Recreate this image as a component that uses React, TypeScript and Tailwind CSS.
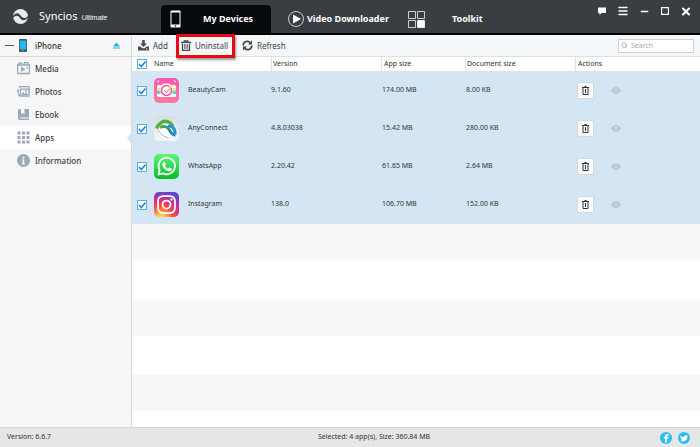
import { useState } from "react"
import { Menu, Minus, Search, X } from "lucide-react"

type AppRow = {
  name: string
  version: string
  appSize: string
  docSize: string
  icon: React.ReactNode
}

function BeautyCamIcon() {
  return (
    <svg viewBox="0 0 50 50" className="w-[25px] h-[25px] shrink-0">
      <defs>
        <linearGradient id="beauty" x1="0" y1="0" x2="0" y2="1">
          <stop offset="0" stopColor="#f957ac" />
          <stop offset="1" stopColor="#fb7c9c" />
        </linearGradient>
      </defs>
      <rect width="50" height="50" rx="10" fill="url(#beauty)" />
      <path d="M7 8l3-3M43 8l-3-3" stroke="#fdd0e6" strokeWidth="3" />
      <path d="M9 14h7l3-3h12l3 3h7q3 0 3 3v18q0 3-3 3H9q-3 0-3-3V17q0-3 3-3z" fill="#fff" />
      <path d="M6 20h7v6H6zM37 20h7v6h-7z" fill="#ffe45c" />
      <path d="M6 26h7v6H6zM37 26h7v6h-7z" fill="#4fd3ee" />
      <circle cx="25" cy="25" r="10" fill="#fff" stroke="#f94f9c" strokeWidth="3" />
      <path d="M21 25l4 4 6-7" stroke="#f94f9c" strokeWidth="2" fill="none" />
      <circle cx="32" cy="18" r="3" fill="#ffd93b" />
    </svg>
  )
}

function AnyConnectIcon() {
  return (
    <svg viewBox="0 0 50 50" className="w-[25px] h-[25px] shrink-0">
      <defs>
        <linearGradient id="anyBg" x1="0" y1="0" x2="0" y2="1">
          <stop offset="0" stopColor="#d9dcde" />
          <stop offset="1" stopColor="#f6f6f6" />
        </linearGradient>
        <linearGradient id="anyBand" x1="0" y1="0" x2="1" y2="1">
          <stop offset="0" stopColor="#4cae4f" />
          <stop offset="0.500" stopColor="#2b8f7c" />
          <stop offset="1" stopColor="#2c8fd6" />
        </linearGradient>
      </defs>
      <rect width="50" height="50" rx="10" fill="url(#anyBg)" />
      <circle cx="24" cy="31" r="15" fill="#fff" />
      <path d="M9 27c2 9 9 15 20 16" stroke="#b0b5b9" strokeWidth="2" fill="none" />
      <path d="M5 25C9 14 19 8 29 12c5 2 7 5 8 9" fill="none" stroke="#4fb045" strokeWidth="7" />
      <path d="M12 23c10-5 17 0 20 7 3 6 6 8 11 8" fill="none" stroke="url(#anyBand)" strokeWidth="6" />
      <path d="M28 21c8-2 15 4 14 16" fill="none" stroke="#2c8fd6" strokeWidth="6" />
    </svg>
  )
}

function WhatsAppIcon() {
  return (
    <svg viewBox="0 0 50 50" className="w-[25px] h-[25px] shrink-0">
      <defs>
        <linearGradient id="wa" x1="0" y1="0" x2="0" y2="1">
          <stop offset="0" stopColor="#5cf777" />
          <stop offset="1" stopColor="#08bd25" />
        </linearGradient>
      </defs>
      <rect width="50" height="50" rx="10" fill="url(#wa)" />
      <path
        d="M9 41l2.400-8.500A16.500 16.500 0 1 1 18 38.700z"
        fill="none"
        stroke="#fff"
        strokeWidth="3.500"
        strokeLinejoin="round"
      />
      <path
        d="M19 16.500c1-1 2.500-.8 3 .3l1.500 3.500c.3 1-.2 1.500-1.500 3 1.500 3 3.500 4.700 6.500 6 1.500-1.800 2-2.500 3-2l3.500 1.700c1 .5 1 1.500.5 2.700-1 2.500-4 3.300-6 2.800-6-1.200-11-6-12.500-11-.6-2.500 0-5 2-7z"
        fill="#fff"
      />
    </svg>
  )
}

function InstagramIcon() {
  return (
    <svg viewBox="0 0 50 50" className="w-[25px] h-[25px] shrink-0">
      <defs>
        <radialGradient id="insta" cx="0.270" cy="1.070" r="1.100">
          <stop offset="0" stopColor="#ffdd55" />
          <stop offset="0.150" stopColor="#ffc850" />
          <stop offset="0.450" stopColor="#f8503e" />
          <stop offset="0.720" stopColor="#d02c8e" />
          <stop offset="1" stopColor="#5b48d0" />
        </radialGradient>
      </defs>
      <rect width="50" height="50" rx="10" fill="url(#insta)" />
      <rect x="8" y="8" width="34" height="34" rx="10" fill="none" stroke="#fff" strokeWidth="3.500" />
      <circle cx="25" cy="25" r="8" fill="none" stroke="#fff" strokeWidth="3.500" />
      <circle cx="35" cy="15" r="2.300" fill="#fff" />
    </svg>
  )
}

function TrashIcon() {
  return (
    <svg viewBox="0 0 20 22" className="h-[11px] w-[10px] shrink-0 text-[#444]" fill="none" stroke="currentColor">
      <path d="M6.500 3.500v-2h7v2M0 4.500h20" strokeWidth="2.500" />
      <path d="M3 7v13.500h14V7" strokeWidth="2.500" />
      <path d="M7.200 8v10M10 8v10M12.800 8v10" strokeWidth="1.500" />
    </svg>
  )
}

const apps: AppRow[] = [
  { name: "BeautyCam", version: "9.1.60", appSize: "174.00 MB", docSize: "8.00 KB", icon: <BeautyCamIcon /> },
  { name: "AnyConnect", version: "4.8.03038", appSize: "15.42 MB", docSize: "280.00 KB", icon: <AnyConnectIcon /> },
  { name: "WhatsApp", version: "2.20.42", appSize: "61.65 MB", docSize: "2.64 MB", icon: <WhatsAppIcon /> },
  { name: "Instagram", version: "138.0", appSize: "106.70 MB", docSize: "152.00 KB", icon: <InstagramIcon /> },
]

const menuItems = [
  {
    label: "Media",
    icon: (
      <>
        <path d="M1 6h24v17H1z" fill="none" stroke="currentColor" strokeWidth="3" />
        <path d="M4 6V2h6v4M15 6V1h7v5" fill="none" stroke="currentColor" strokeWidth="2.500" />
        <path d="M8 9l9 5.500L8 20zM19 10h3v3h-3z" fill="currentColor" />
      </>
    ),
  },
  {
    label: "Photos",
    icon: (
      <>
        <path d="M5 9L1 11l3 10h3M5 6V3h19v13" fill="none" stroke="currentColor" strokeWidth="2.500" />
        <path d="M7 8h17v14H7z" fill="none" stroke="currentColor" strokeWidth="2.500" />
        <path d="M8 21l4-7 4 4 3-3 4 6z" fill="currentColor" />
        <circle cx="18" cy="12" r="2" fill="currentColor" />
      </>
    ),
  },
  {
    label: "Ebook",
    icon: (
      <path
        d="M5 2h3v11l3.500-3 3.500 3V2h9v17H6v2h18v3H5q-3 0-3-3V5q0-3 3-3z"
        fill="currentColor"
      />
    ),
  },
  {
    label: "Apps",
    icon: (
      <path
        d="M1 1h6v6H1zM10 1h6v6h-6zM19 1h6v6h-6zM1 10h6v6H1zM10 10h6v6h-6zM19 10h6v6h-6zM1 19h6v6H1zM10 19h6v6h-6zM19 19h6v6h-6z"
        fill="currentColor"
      />
    ),
  },
  {
    label: "Information",
    icon: (
      <>
        <circle cx="13" cy="13" r="13" fill="currentColor" />
        <circle cx="13" cy="7" r="2.200" fill="#fff" />
        <path d="M9.500 11h5v8h2v2h-7v-2h2v-6h-2z" fill="#fff" />
      </>
    ),
  },
]

function Check({ label, checked, onChange }: { label: string; checked: boolean; onChange: () => void }) {
  return (
    <label className="grid size-[10px] place-items-center">
      <input
        type="checkbox"
        aria-label={label}
        checked={checked}
        onChange={onChange}
        className="peer col-start-1 row-start-1 size-[10px] appearance-none border border-[#5aaee0] bg-white"
      />
      <svg
        viewBox="0 0 10 10"
        className="pointer-events-none invisible col-start-1 row-start-1 size-[10px] peer-checked:visible"
      >
        <path d="M2 5l2.300 2.500L8.500 2.500" fill="none" stroke="#2288cc" strokeWidth="1.600" />
      </svg>
    </label>
  )
}

function Header() {
  return (
    <header className="flex h-[35px] shrink-0 items-start border-b-2 border-black bg-[#3a3e42] text-white">
      <div className="flex h-[33px] w-[161px] shrink-0 items-center gap-[11px] pl-[13px]">
        <svg viewBox="0 0 30 30" className="size-[15px]">
          <circle cx="15" cy="15" r="15" fill="#e9eaeb" />
          <path d="M0 14c5-7 11-7 15-1s9 7 15 1v3c-5 7-12 7-16 1s-9-6-14 0z" fill="#3a3e42" />
        </svg>
        <div className="flex items-baseline gap-1">
          <span className="text-[11px]">Syncios</span>
          <span className="font-[Liberation_Sans] text-[7px] italic">Ultimate</span>
        </div>
      </div>
      <nav className="flex h-[33px] items-end text-[9px] font-bold">
        <button className="flex h-[28px] w-[110px] items-center gap-[22px] rounded-t-sm bg-[#080b0d] pl-[9px]">
          <svg viewBox="0 0 22 36" className="h-[18px] w-[11px]">
            <rect x="1" y="1" width="20" height="34" rx="2" fill="#fff" />
            <path d="M3 5h16v24H3z" fill="#080b0d" />
            <circle cx="11" cy="32" r="1.500" fill="#080b0d" />
          </svg>
          My Devices
        </button>
        <button className="flex h-[28px] w-[128px] items-center gap-[3px] pl-[17px]">
          <svg viewBox="0 0 32 32" className="size-4">
            <circle cx="16" cy="16" r="15" fill="none" stroke="#fff" strokeWidth="1.500" />
            <path d="M10 7l16 9-16 9z" fill="#fff" />
          </svg>
          Video Downloader
        </button>
        <button className="flex h-[28px] items-center gap-[27px] pl-[9px]">
          <svg viewBox="0 0 34 34" className="size-[17px]" fill="none" stroke="#fff" strokeWidth="1.500">
            <path d="M1 1h14v14H1zM19 1h14v14H19zM1 19h14v14H1z" />
            <path d="M19 19h14v14H19z" fill="#fff" />
          </svg>
          Toolkit
        </button>
      </nav>
      <div className="ml-auto flex h-[22px] items-center gap-[9px] pr-2">
        <button aria-label="Feedback" className="flex w-3 justify-center">
          <svg viewBox="0 0 16 16" className="size-2">
            <path d="M1 1h15v11H7l-4 4v-4H0V2z" fill="#fff" />
          </svg>
        </button>
        <button aria-label="Menu" className="flex w-3 justify-center">
          <Menu size={12} strokeWidth={3} />
        </button>
        <button aria-label="Minimize" className="flex w-3 justify-center">
          <Minus size={11} strokeWidth={3} />
        </button>
        <button aria-label="Maximize" className="flex w-3 justify-center">
          <svg viewBox="0 0 8 8" className="size-2">
            <path d="M.5.5h7v7h-7z" fill="none" stroke="#fff" strokeWidth="1.300" />
          </svg>
        </button>
        <button aria-label="Close" className="flex w-3 justify-center">
          <X size={13} strokeWidth={4} />
        </button>
      </div>
    </header>
  )
}

function Sidebar() {
  const [active, setActive] = useState("Apps")

  return (
    <aside className="w-[132px] shrink-0 border-r border-[#d5d9dc] bg-[#f6f6f6] text-[8px] font-medium">
      <div className="flex h-[22px] items-center border-b border-[#d9d9d9] pr-[11px] pl-[5px]">
        <span className="mr-[5px] h-px w-[9px] bg-[#555]" />
        <svg viewBox="0 0 16 26" className="mr-[5px] h-[13px] w-2">
          <rect width="16" height="26" rx="2" fill="#4b5257" />
          <path d="M1.500 3h13v18h-13z" fill="#22b8f0" />
          <circle cx="8" cy="23.500" r="1.200" fill="#fff" />
        </svg>
        <span className="ml-[3px] text-[#333]">iPhone</span>
        <button aria-label="Eject" className="ml-auto">
          <svg viewBox="0 0 14 14" className="size-[7px]" fill="#22b0ee">
            <path d="M7 1l7 8H0zM0 11h14v2H0z" />
          </svg>
        </button>
      </div>
      <nav>
        {menuItems.map((item) => (
          <button
            key={item.label}
            onClick={() => setActive(item.label)}
            className={`relative flex h-[23px] w-full items-center gap-[5px] pl-[17px] text-[#3c4046] ${
              active === item.label ? "bg-white" : ""
            }`}
          >
            <svg viewBox="0 0 26 26" className="size-[13px] text-[#98a9bb]">
              {item.icon}
            </svg>
            {item.label}
            {active === item.label && (
              <svg viewBox="0 0 5 10" className="absolute top-[7px] -right-px h-[10px] w-[5px]">
                <path d="M5 0L.5 5 5 10z" fill="#d5e6f3" stroke="#c9d3da" strokeWidth="0.700" />
              </svg>
            )}
          </button>
        ))}
      </nav>
    </aside>
  )
}

function Toolbar() {
  return (
    <div className="flex h-[22px] shrink-0 items-center border-b border-[#dde1e4] bg-[#f3f7fa] px-[6px] text-[8px] text-[#444]">
      <button className="flex items-center gap-1">
        <svg viewBox="0 0 22 22" className="size-[11px]" fill="#4a4a4a">
          <path d="M8.500 0h5v7H18l-7 7-7-7h4.500z" />
          <path d="M0 13h5l3.500 3.500h5L17 13h5v8H0zM16 17v2h3v-2z" />
        </svg>
        Add
      </button>
      <button className="relative z-10 -my-1 ml-2 flex h-6 w-[59px] shrink-0 items-center gap-1 border-3 border-[#e60a12] pl-[2px] shadow-[1px_2px_2px_#0006]">
        <TrashIcon />
        Uninstall
      </button>
      <button className="ml-[7px] flex items-center gap-1">
        <svg viewBox="0 0 22 22" className="size-[11px]" fill="none" stroke="#444" strokeWidth="3.500">
          <path d="M2.500 11A8 8 0 0 1 17 6M19.500 11A8 8 0 0 1 5 16" />
          <path d="M20 1v8h-8zM2 21v-8h8z" fill="#444" stroke="none" />
        </svg>
        Refresh
      </button>
      <label className="ml-auto flex h-[14px] w-[76px] items-center gap-[3px] border border-[#cdd2d6] bg-white pl-[2px]">
        <Search size={7} className="shrink-0 text-[#888]" />
        <input
          type="search"
          aria-label="Search"
          placeholder="Search"
          className="w-full min-w-0 text-[7px] leading-3 outline-none placeholder:text-[#aaa]"
        />
      </label>
    </div>
  )
}

function AppTable() {
  const [selected, setSelected] = useState(apps.map((app) => app.name))

  function toggle(name: string) {
    setSelected(selected.includes(name) ? selected.filter((n) => n !== name) : [...selected, name])
  }

  function toggleAll() {
    setSelected(selected.length === apps.length ? [] : apps.map((app) => app.name))
  }

  return (
    <div className="min-h-0 flex-1 overflow-hidden bg-white">
      <table className="w-full table-fixed border-separate border-spacing-0 text-left text-[7px] text-[#333]">
        <colgroup>
          <col className="w-5" />
          <col className="w-[119px]" />
          <col className="w-[110px]" />
          <col className="w-[84px]" />
          <col className="w-[110px]" />
          <col />
        </colgroup>
        <thead>
          <tr className="h-[15px] leading-[14px] [&>th]:border-b [&>th]:border-[#dfe4e8] [&>th]:p-0 [&>th]:font-normal">
            <th>
              <div className="pl-[5px]">
                <Check label="Select all" checked={selected.length === apps.length} onChange={toggleAll} />
              </div>
            </th>
            <th><div className="pl-[2px]">Name</div></th>
            <th><div className="border-l border-[#e3e3e3] pl-px">Version</div></th>
            <th><div className="border-l border-[#e3e3e3] pl-[2px]">App size</div></th>
            <th><div className="border-l border-[#e3e3e3] pl-px">Document size</div></th>
            <th><div className="border-l border-[#e3e3e3] pl-[2px]">Actions</div></th>
          </tr>
        </thead>
        <tbody>
          {apps.map((app) => (
            <tr
              key={app.name}
              className={`h-[38px] [&>td]:border-b [&>td]:border-[#dfe5ea] [&>td]:p-0 ${
                selected.includes(app.name) ? "bg-[#d4e6f4]" : ""
              }`}
            >
              <td>
                <div className="pl-[5px]">
                  <Check
                    label={`Select ${app.name}`}
                    checked={selected.includes(app.name)}
                    onChange={() => toggle(app.name)}
                  />
                </div>
              </td>
              <td>
                <div className="flex items-center gap-[9px] pl-[2px]">
                  {app.icon}
                  {app.name}
                </div>
              </td>
              <td>{app.version}</td>
              <td><div className="pl-px">{app.appSize}</div></td>
              <td><div className="pl-px">{app.docSize}</div></td>
              <td>
                <div className="flex items-center gap-[17px] pl-[2px]">
                  <button
                    aria-label={`Uninstall ${app.name}`}
                    className="flex size-[17px] items-center justify-center border border-[#d3d9de] bg-[#fafafa]"
                  >
                    <svg viewBox="0 0 7 9" className="h-[9px] w-[7px]" fill="none" stroke="#333">
                      <path d="M0 1.500h7M2.500.500h2M1 2v6.500h5V2M3.500 3v4" />
                    </svg>
                  </button>
                  <button aria-label={`Show ${app.name}`}>
                    <svg viewBox="0 0 20 14" className="h-[7px] w-[10px]">
                      <path d="M0 7q10-14 20 0-10 14-20 0z" fill="#b9c0c5" />
                      <circle cx="10" cy="7" r="4" fill="#dce3e8" />
                      <circle cx="10" cy="7" r="2" fill="#b0b7bc" />
                    </svg>
                  </button>
                </div>
              </td>
            </tr>
          ))}
        </tbody>
      </table>
      {[0, 1, 2].map((n) => (
        <div key={n} className="mb-[38px] h-[37px] bg-[#f8f8f8]" />
      ))}
    </div>
  )
}

function Footer() {
  return (
    <footer className="grid h-5 shrink-0 grid-cols-3 items-center border-t border-[#d6d6d6] bg-[#e6e6e6] px-[7px] text-[7px] text-[#333]">
      <span>Version: 6.6.7</span>
      <span className="justify-self-center pl-12 whitespace-nowrap">Selected: 4 app(s), Size: 360.84 MB</span>
      <div className="flex gap-[6px] justify-self-end pr-[3px]">
        <a href="#facebook" aria-label="Facebook">
          <svg viewBox="0 0 24 24" className="size-3">
            <circle cx="12" cy="12" r="12" fill="#28bdf3" />
            <path d="M10 21v-8H7.500v-3.500H10V8q0-4 4-4h3v3.500h-2q-1.500 0-1.500 1.500v.5H17l-.5 3.500h-3v8z" fill="#fff" />
          </svg>
        </a>
        <a href="#twitter" aria-label="Twitter">
          <svg viewBox="0 0 24 24" className="size-3">
            <circle cx="12" cy="12" r="12" fill="#28bdf3" />
            <path
              d="M5 7q3 3.500 7 3.500C11.500 7 15.500 5 18 7.500l2-.7-1.200 2L20 8.500l-1.700 2C18.500 17 11 21 4.500 17.500q3 0 4.500-1.300-2.200-.3-3-2.200h1.500Q5 13 4.800 10.500l1.500.4Q4.200 9.500 5 7z"
              fill="#fff"
            />
          </svg>
        </a>
      </div>
    </footer>
  )
}

function App() {
  return (
    <div className="flex h-screen flex-col font-['Noto_Sans',sans-serif]">
      <Header />
      <div className="flex min-h-0 flex-1">
        <Sidebar />
        <main className="flex min-w-0 flex-1 flex-col">
          <Toolbar />
          <AppTable />
        </main>
      </div>
      <Footer />
    </div>
  )
}

export default App
